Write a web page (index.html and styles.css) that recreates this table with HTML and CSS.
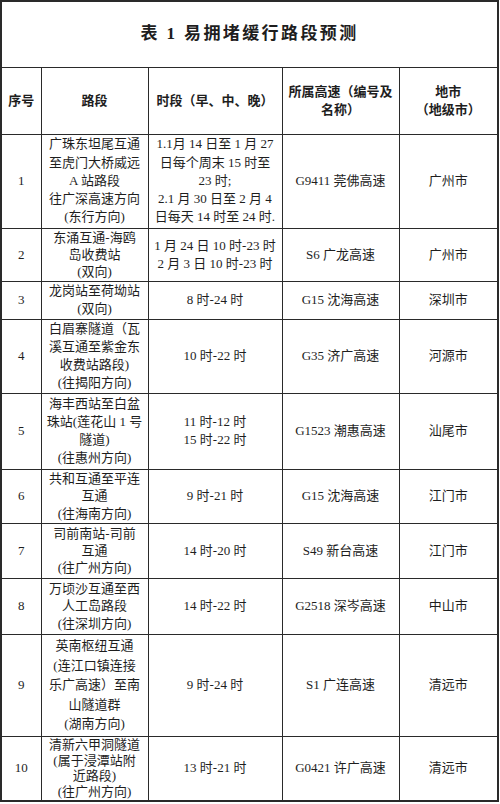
FILE: index.html
```html
<!DOCTYPE html>
<html lang="zh-CN">
<head>
<meta charset="utf-8">
<title>表1 易拥堵缓行路段预测</title>
<link rel="stylesheet" href="styles.css">
</head>
<body>
<table class="tbl">
  <colgroup>
    <col class="c1"><col class="c2"><col class="c3"><col class="c4"><col class="c5">
  </colgroup>
  <tr class="r-title"><th colspan="5" class="title">表 1 易拥堵缓行路段预测</th></tr>
  <tr class="r-head">
    <th>序号</th>
    <th>路段</th>
    <th>时段（早、中、晚）</th>
    <th>所属高速（编号及<br>名称）</th>
    <th>地市<br>（地级市）</th>
  </tr>
  <tr class="r1">
    <td>1</td>
    <td>广珠东坦尾互通<br>至虎门大桥威远<br>A 站路段<br>往广深高速方向<br>(东行方向)</td>
    <td>1.1月 14 日至 1 月 27<br>日每个周末 15 时至<br>23 时;<br>2.1 月 30 日至 2 月 4<br>日每天 14 时至 24 时.</td>
    <td>G9411 莞佛高速</td>
    <td>广州市</td>
  </tr>
  <tr class="r2">
    <td>2</td>
    <td>东涌互通-海鸥<br>岛收费站<br>(双向)</td>
    <td>1 月 24 日 10 时-23 时<br>2 月 3 日 10 时-23 时</td>
    <td>S6 广龙高速</td>
    <td>广州市</td>
  </tr>
  <tr class="r3">
    <td>3</td>
    <td>龙岗站至荷坳站<br>(双向)</td>
    <td>8 时-24 时</td>
    <td>G15 沈海高速</td>
    <td>深圳市</td>
  </tr>
  <tr class="r4">
    <td>4</td>
    <td>白眉寨隧道（瓦<br>溪互通至紫金东<br>收费站路段)<br>(往揭阳方向)</td>
    <td>10 时-22 时</td>
    <td>G35 济广高速</td>
    <td>河源市</td>
  </tr>
  <tr class="r5">
    <td>5</td>
    <td>海丰西站至白盆<br>珠站(莲花山 1 号<br>隧道)<br>(往惠州方向)</td>
    <td>11 时-12 时<br>15 时-22 时</td>
    <td>G1523 潮惠高速</td>
    <td>汕尾市</td>
  </tr>
  <tr class="r6">
    <td>6</td>
    <td>共和互通至平连<br>互通<br>(往海南方向)</td>
    <td>9 时-21 时</td>
    <td>G15 沈海高速</td>
    <td>江门市</td>
  </tr>
  <tr class="r7">
    <td>7</td>
    <td>司前南站-司前<br>互通<br>(往广州方向)</td>
    <td>14 时-20 时</td>
    <td>S49 新台高速</td>
    <td>江门市</td>
  </tr>
  <tr class="r8">
    <td>8</td>
    <td>万顷沙互通至西<br>人工岛路段<br>(往深圳方向)</td>
    <td>14 时-22 时</td>
    <td>G2518 深岑高速</td>
    <td>中山市</td>
  </tr>
  <tr class="r9">
    <td>9</td>
    <td>英南枢纽互通<br>(连江口镇连接<br>乐广高速）至南<br>山隧道群<br>(湖南方向)</td>
    <td>9 时-24 时</td>
    <td>S1 广连高速</td>
    <td>清远市</td>
  </tr>
  <tr class="r10">
    <td>10</td>
    <td>清新六甲洞隧道<br>(属于浸潭站附<br>近路段)<br>(往广州方向)</td>
    <td>13 时-21 时</td>
    <td>G0421 许广高速</td>
    <td>清远市</td>
  </tr>
</table>
</body>
</html>
```

FILE: styles.css
```css
html, body {
  margin: 0;
  padding: 0;
  background: #ffffff;
}

body {
  font-family: "Liberation Serif", "Noto Sans CJK SC", serif;
  color: #1e1e1e;
}

.tbl {
  width: 497px;
  border-collapse: collapse;
  table-layout: fixed;
  border: 2px solid #2a2a2a;
}

.c1 { width: 40px; }
.c2 { width: 107px; }
.c3 { width: 134px; }
.c4 { width: 117px; }
.c5 { width: 99px; }

.tbl th,
.tbl td {
  border: 1px solid #2a2a2a;
  padding: 0;
  text-align: center;
  vertical-align: middle;
  font-size: 13px;
  line-height: 18px;
}

.tbl th {
  font-weight: bold;
}

.tbl td {
  font-weight: normal;
}

.title {
  font-size: 17px !important;
  letter-spacing: 2.4px;
  line-height: 22px !important;
}

.r-title { height: 66px; }
.r-head { height: 67px; }
.r1 { height: 94px; }
.r2 { height: 53px; }
.r3 { height: 38px; }
.r4 { height: 74px; }
.r5 { height: 76px; }
.r6 { height: 54px; }
.r7 { height: 55px; }
.r8 { height: 56px; }
.r9 { height: 102px; }
.r10 { height: 65px; }

.r1 td { line-height: 18.2px; }
.r2 td, .r6 td, .r7 td { line-height: 17.2px; }
.r8 td { line-height: 17.6px; }
.r9 td { line-height: 19.6px; }
.r10 td { line-height: 15.6px; }
```
